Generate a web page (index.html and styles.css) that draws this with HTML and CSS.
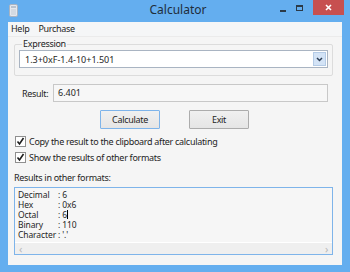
FILE: index.html
```html
<!DOCTYPE html>
<html lang="en">
<head>
    <meta charset="UTF-8">
    <title>Calculator</title>
    <link rel="stylesheet" href="styles.css">
</head>
<body>
    <div class="window">
        <div class="titlebar">
            <div class="app-icon">
                <svg viewBox="0 0 9 13" width="9" height="13"><rect x="0.5" y="0.5" width="8" height="12" rx="1.5" fill="#e4e8ee" stroke="#a9b4c2"/><rect x="2" y="2" width="5" height="2" fill="#b9c3cf"/><path d="M2 6h5M2 8h5M2 10h5" stroke="#c3ccd6"/></svg>
            </div>
            <span class="title">Calculator</span>
            <div class="controls">
                <span class="ctl ctl-min"><i></i></span>
                <span class="ctl ctl-max"><i></i></span>
                <span class="ctl ctl-close">
                    <svg viewBox="0 0 7 7" width="7" height="7"><path d="M1 1l5 5M6 1l-5 5" stroke="#fff" stroke-width="1.6"/></svg>
                </span>
            </div>
        </div>

        <div class="client">
            <div class="menubar">
                <span class="menu-item">Help</span>
                <span class="menu-item">Purchase</span>
            </div>

            <div class="content">
                <fieldset class="group">
                    <legend>Expression</legend>
                    <div class="combo">
                        <span class="combo-text">1.3+0xF-1.4-10+1.501</span>
                        <span class="combo-btn">
                            <svg viewBox="0 0 7 5" width="7" height="5"><path d="M1 1l2.5 2.5L6 1" fill="none" stroke="#2c3e55" stroke-width="1.5"/></svg>
                        </span>
                    </div>
                </fieldset>

                <div class="result-row">
                    <span class="result-label">Result:</span>
                    <div class="textbox">6.401</div>
                </div>

                <div class="buttons">
                    <button class="btn btn-default">Calculate</button>
                    <button class="btn">Exit</button>
                </div>

                <div class="check">
                    <span class="checkbox">
                        <svg viewBox="0 0 9 9" width="9" height="9"><path d="M1.5 4.5l2 2.5 4-6" fill="none" stroke="#1d1d1d" stroke-width="1.6"/></svg>
                    </span>
                    Copy the result to the clipboard after calculating
                </div>
                <div class="check">
                    <span class="checkbox">
                        <svg viewBox="0 0 9 9" width="9" height="9"><path d="M1.5 4.5l2 2.5 4-6" fill="none" stroke="#1d1d1d" stroke-width="1.6"/></svg>
                    </span>
                    Show the results of other formats
                </div>

                <div class="formats-label">Results in other formats:</div>
                <div class="formats">
                    <div class="formats-text">
                        <span>Decimal</span><span>: 6</span>
                        <span>Hex</span><span>: 0x6</span>
                        <span>Octal</span><span>: 6<i class="caret"></i></span>
                        <span>Binary</span><span>: 110</span>
                        <span>Character</span><span>: '.'</span>
                    </div>
                    <div class="hscroll">
                        <span class="arrow">&lsaquo;</span>
                        <span class="arrow">&rsaquo;</span>
                    </div>
                </div>
            </div>
        </div>
    </div>
</body>
</html>
```

FILE: styles.css
```css
* {
    margin: 0;
    padding: 0;
    box-sizing: border-box;
}

body {
    font-family: 'Noto Sans', 'Open Sans', sans-serif;
    font-size: 9px;
    letter-spacing: -0.3px;
    color: #1e1e1e;
    background: #64aeef;
}

.window {
    width: 350px;
    height: 272px;
    background: #64aeef;
    display: flex;
    flex-direction: column;
}

/* title bar */
.titlebar {
    height: 22px;
    display: grid;
    grid-template-columns: 1fr auto 1fr;
    align-items: start;
    padding: 0 6px 0 9px;
}

.app-icon {
    padding-top: 4px;
}

.title {
    font-size: 12px;
    letter-spacing: 0;
    color: #1f2d3a;
    line-height: 20px;
    padding-left: 3px;
}

.controls {
    justify-self: end;
    display: flex;
    align-items: flex-start;
}

.ctl {
    display: flex;
    align-items: center;
    justify-content: center;
    height: 15px;
}

.ctl-min {
    width: 17px;
    padding-top: 6px;
}

.ctl-min i {
    display: block;
    width: 6px;
    height: 2px;
    background: #2b3a48;
}

.ctl-max {
    width: 16px;
    padding-top: 1px;
}

.ctl-max i {
    display: block;
    width: 7px;
    height: 6px;
    border: 1px solid #2b3a48;
    border-top-width: 2px;
}

.ctl-close {
    width: 31px;
    margin-left: 6px;
    background: #c75050;
}

/* client area */
.client {
    flex: 1;
    margin: 0 8px 7px 8px;
    background: #f5f5f5;
    display: flex;
    flex-direction: column;
}

.menubar {
    height: 15px;
    display: flex;
    gap: 9px;
    padding-left: 3px;
    background: #f5f6f7;
    border-bottom: 1px solid #ebebeb;
    line-height: 14px;
}

.content {
    display: flex;
    flex-direction: column;
    padding: 0 9px 0 6px;
}

.group {
    border: 1px solid #dcdcdc;
    border-radius: 2px;
    margin-top: 1px;
    padding: 0 4px 7px 4px;
}

.group legend {
    margin-left: 3px;
    padding: 0 1px;
    line-height: 12px;
}

.combo {
    height: 18px;
    display: flex;
    align-items: center;
    justify-content: space-between;
    background: #fff;
    border: 1px solid #a9b4c2;
    padding: 0 1px 0 5px;
    letter-spacing: 0;
}

.combo-btn {
    width: 13px;
    height: 14px;
    display: flex;
    align-items: center;
    justify-content: center;
    background: #d3e3f6;
    border: 1px solid #b4cbe6;
}

.result-row {
    display: flex;
    align-items: center;
    margin-top: 8px;
    padding-left: 8px;
    padding-right: 5px;
}

.result-label {
    width: 31px;
}

.textbox {
    flex: 1;
    height: 18px;
    line-height: 16px;
    border: 1px solid #c8c8c8;
    background: #f7f7f7;
    padding-left: 4px;
    letter-spacing: 0;
}

.buttons {
    display: flex;
    gap: 29px;
    margin-top: 8px;
    padding-left: 86px;
}

.btn {
    width: 60px;
    height: 19px;
    font: inherit;
    letter-spacing: inherit;
    color: #1e1e1e;
    border: 1px solid #acacac;
    border-radius: 1px;
    background: linear-gradient(#f0f0f0, #e5e5e5);
}

.btn-default {
    border-color: #7eb4ea;
}

.check {
    display: flex;
    align-items: center;
    gap: 3px;
    height: 16px;
    padding-left: 1px;
}

.buttons + .check {
    margin-top: 4px;
}

.checkbox {
    width: 11px;
    height: 11px;
    border: 1px solid #8f8f8f;
    background: #fff;
    display: flex;
    align-items: center;
    justify-content: center;
}

.formats-label {
    margin-top: 7px;
    line-height: 12px;
}

.formats {
    margin-top: 3px;
    height: 68px;
    border: 1px solid #7eb4ea;
    background: #f6f6f6;
    display: flex;
    flex-direction: column;
    justify-content: space-between;
}

.formats-text {
    display: grid;
    grid-template-columns: 40px auto;
    font-size: 8.5px;
    line-height: 10px;
    letter-spacing: -0.1px;
    padding: 2px 0 0 3px;
}

.caret {
    display: inline-block;
    width: 1px;
    height: 9px;
    background: #000;
    vertical-align: -1px;
}

.hscroll {
    height: 12px;
    display: flex;
    justify-content: space-between;
    align-items: center;
    background: #efefef;
    border-top: 1px solid #fff;
    padding: 0 4px;
    color: #b9b9b9;
    font-size: 11px;
}
```
